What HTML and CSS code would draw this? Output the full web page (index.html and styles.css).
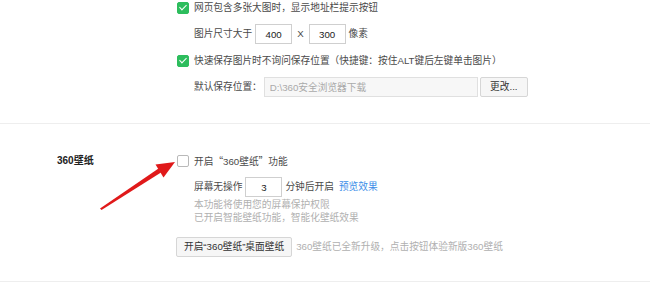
FILE: index.html
```html
<!DOCTYPE html>
<html>
<head>
    <meta charset="UTF-8">
    <title>360壁纸设置</title>
    <link rel="stylesheet" href="styles.css">
</head>
<body>
<div class="page">
    <div class="section">
        <div class="label"></div>
        <div class="content">
            <div class="opt">
                <span class="check on"></span>
                <span>网页包含多张大图时，显示地址栏提示按钮</span>
            </div>
            <div class="sub sub-size">
                <span>图片尺寸大于</span>
                <input class="num" type="text" value="400">
                <span class="x">X</span>
                <input class="num" type="text" value="300">
                <span>像素</span>
            </div>
            <div class="opt opt-save">
                <span class="check on"></span>
                <span>快速保存图片时不询问保存位置（快捷键：按住ALT键后左键单击图片）</span>
            </div>
            <div class="sub sub-path">
                <span>默认保存位置：</span>
                <input class="path" type="text" value="D:\360安全浏览器下载" disabled>
                <button class="btn btn-change">更改...</button>
            </div>
        </div>
    </div>
    <div class="section section-wall">
        <div class="label">360壁纸</div>
        <div class="content">
            <div class="opt">
                <span class="check"></span>
                <span>开启<span class="cjk">“</span>360壁纸<span class="cjk">”</span>功能</span>
            </div>
            <div class="sub sub-idle">
                <span>屏幕无操作</span>
                <input class="num" type="text" value="3">
                <span>分钟后开启</span>
                <a class="link" href="#">预览效果</a>
            </div>
            <div class="tip tip-first">本功能将使用您的屏幕保护权限</div>
            <div class="tip">已开启智能壁纸功能，智能化壁纸效果</div>
            <div class="btn-row">
                <button class="btn">开启“360壁纸”桌面壁纸</button>
                <span class="note">360壁纸已全新升级，点击按钮体验新版360壁纸</span>
            </div>
        </div>
    </div>
</div>
<!-- 红色箭头标注 -->
<svg class="arrow" width="650" height="301" viewBox="0 0 650 301">
    <polygon points="100,208.5 101.5,210 161,172.5 158.5,168.5" fill="#e0191a"/>
    <polygon points="175,162 155.5,164.5 163.5,177.5" fill="#e0191a"/>
</svg>
</body>
</html>
```

FILE: styles.css
```css
body{
    margin: 0;
    padding: 0;
    background-color: #fff;
    color: #4a4a4a;
    font: 9.7px/16px "Liberation Sans", "Noto Sans CJK SC", sans-serif;
}
.page{
    width: 650px;
}
.section{
    display: flex;
    padding-left: 57px;
    padding-bottom: 26px;
    border-bottom: 1px solid #eeeeee;
}
.label{
    width: 120px;
    flex-shrink: 0;
    color: #222;
    font-weight: bold;
    font-size: 10px;
    line-height: 16px;
}
.content{
    display: flex;
    flex-direction: column;
}
.opt{
    display: flex;
    align-items: center;
    height: 16px;
    gap: 5px;
}
.cjk{
    font-family: "Noto Sans CJK SC", sans-serif;
}
.check{
    width: 10px;
    height: 10px;
    border: 1px solid #b9b9b9;
    border-radius: 2px;
    background-color: #fff;
    position: relative;
}
.check.on{
    border-color: #2dbd5d;
    background-color: #2dbd5d;
}
.check.on::after{
    content: "";
    position: absolute;
    left: 3px;
    top: 0px;
    width: 3px;
    height: 6px;
    border: solid #fff;
    border-width: 0 1.5px 1.5px 0;
    transform: rotate(45deg);
}
.sub{
    display: flex;
    align-items: center;
    height: 20px;
    padding-left: 17px;
    gap: 3px;
}
.sub-size{
    margin-top: 8px;
}
.opt-save{
    margin-top: 9px;
}
.sub-path{
    margin-top: 8px;
    gap: 2px;
}
input{
    box-sizing: border-box;
    height: 20px;
    margin: 0;
    border: 1px solid #cfcfcf;
    font: inherit;
    color: #222;
    padding: 0;
}
.num{
    width: 37px;
    text-align: center;
}
.x{
    margin: 0 2px;
}
.path{
    width: 214px;
    padding-left: 5px;
    background-color: #f7f7f7;
    border-color: #e0e0e0;
    color: #aaa;
}
.btn{
    box-sizing: border-box;
    height: 20px;
    padding: 0 7px;
    border: 1px solid #d6d6d6;
    border-radius: 2px;
    background-color: #f6f6f6;
    font: inherit;
    color: #333;
    cursor: pointer;
}
.btn-change{
    width: 48px;
    padding: 0;
}
.section-wall{
    padding-top: 29px;
    padding-bottom: 24px;
}
.sub-idle{
    margin-top: 8px;
}
.link{
    color: #3d8ee8;
    text-decoration: none;
    margin-left: 2px;
}
.tip{
    padding-left: 17px;
    line-height: 13px;
    color: #b0b0b0;
}
.tip-first{
    margin-top: 1px;
}
.btn-row{
    display: flex;
    align-items: center;
    gap: 4px;
    margin-top: 13px;
    margin-left: -1px;
}
.note{
    color: #b0b0b0;
}
.arrow{
    position: absolute;
    left: 0;
    top: 0;
    pointer-events: none;
}
```
